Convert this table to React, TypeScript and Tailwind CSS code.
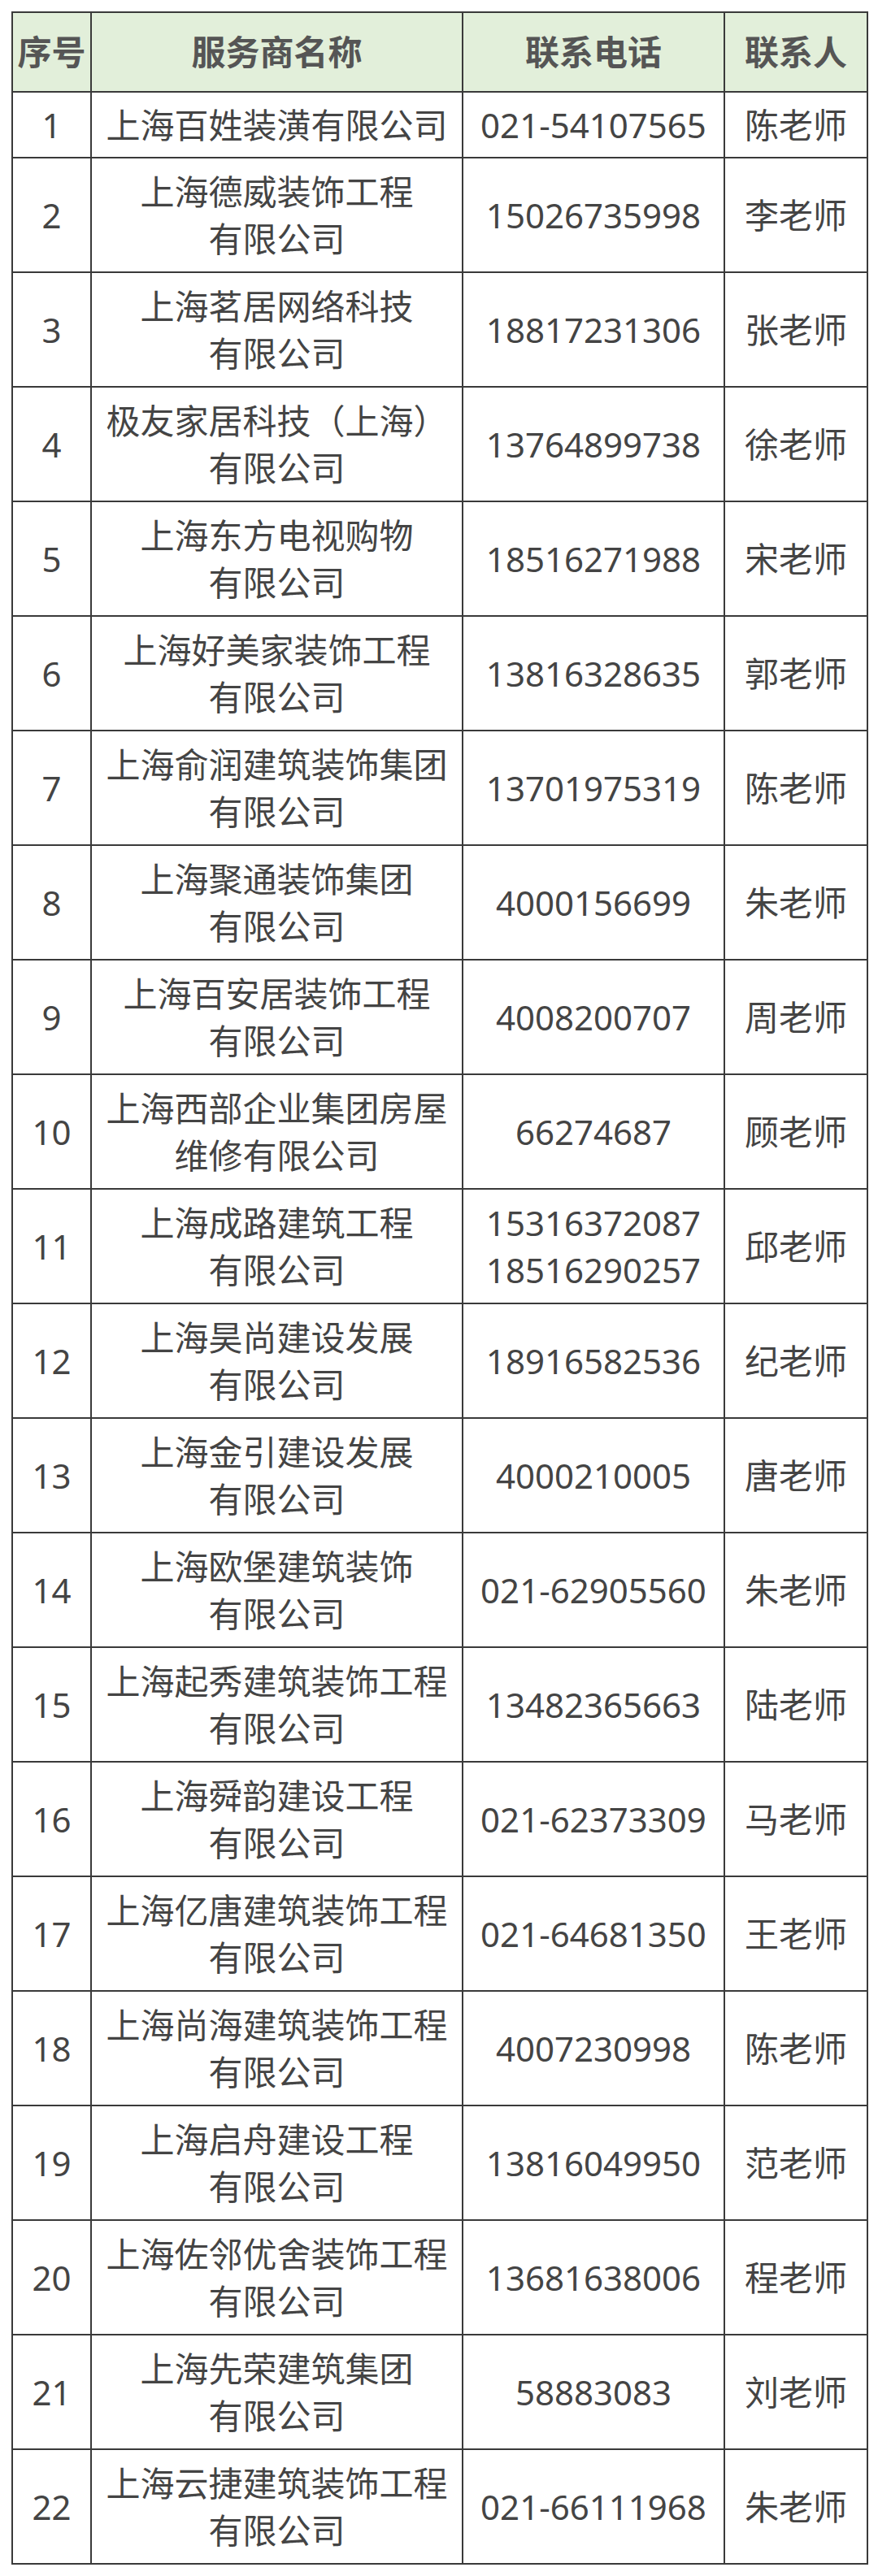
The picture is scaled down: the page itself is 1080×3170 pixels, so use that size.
type Row = { no: number; name: string[]; phone: string[]; contact: string };

const rows: Row[] = [
  { no: 1, name: ['上海百姓装潢有限公司'], phone: ['021-54107565'], contact: '陈老师' },
  { no: 2, name: ['上海德威装饰工程', '有限公司'], phone: ['15026735998'], contact: '李老师' },
  { no: 3, name: ['上海茗居网络科技', '有限公司'], phone: ['18817231306'], contact: '张老师' },
  { no: 4, name: ['极友家居科技（上海）', '有限公司'], phone: ['13764899738'], contact: '徐老师' },
  { no: 5, name: ['上海东方电视购物', '有限公司'], phone: ['18516271988'], contact: '宋老师' },
  { no: 6, name: ['上海好美家装饰工程', '有限公司'], phone: ['13816328635'], contact: '郭老师' },
  { no: 7, name: ['上海俞润建筑装饰集团', '有限公司'], phone: ['13701975319'], contact: '陈老师' },
  { no: 8, name: ['上海聚通装饰集团', '有限公司'], phone: ['4000156699'], contact: '朱老师' },
  { no: 9, name: ['上海百安居装饰工程', '有限公司'], phone: ['4008200707'], contact: '周老师' },
  { no: 10, name: ['上海西部企业集团房屋', '维修有限公司'], phone: ['66274687'], contact: '顾老师' },
  { no: 11, name: ['上海成路建筑工程', '有限公司'], phone: ['15316372087', '18516290257'], contact: '邱老师' },
  { no: 12, name: ['上海昊尚建设发展', '有限公司'], phone: ['18916582536'], contact: '纪老师' },
  { no: 13, name: ['上海金引建设发展', '有限公司'], phone: ['4000210005'], contact: '唐老师' },
  { no: 14, name: ['上海欧堡建筑装饰', '有限公司'], phone: ['021-62905560'], contact: '朱老师' },
  { no: 15, name: ['上海起秀建筑装饰工程', '有限公司'], phone: ['13482365663'], contact: '陆老师' },
  { no: 16, name: ['上海舜韵建设工程', '有限公司'], phone: ['021-62373309'], contact: '马老师' },
  { no: 17, name: ['上海亿唐建筑装饰工程', '有限公司'], phone: ['021-64681350'], contact: '王老师' },
  { no: 18, name: ['上海尚海建筑装饰工程', '有限公司'], phone: ['4007230998'], contact: '陈老师' },
  { no: 19, name: ['上海启舟建设工程', '有限公司'], phone: ['13816049950'], contact: '范老师' },
  { no: 20, name: ['上海佐邻优舍装饰工程', '有限公司'], phone: ['13681638006'], contact: '程老师' },
  { no: 21, name: ['上海先荣建筑集团', '有限公司'], phone: ['58883083'], contact: '刘老师' },
  { no: 22, name: ['上海云捷建筑装饰工程', '有限公司'], phone: ['021-66111968'], contact: '朱老师' },
];

const cell = 'border-2 border-[#3a3a3a] text-center align-middle p-0';

export default function App() {
  return (
    <div
      className="min-h-screen bg-white pt-[14px] pl-[14px] text-[42px] leading-[58px] text-[#444]"
      style={{ fontFamily: '"Noto Sans", "Noto Sans CJK SC", sans-serif' }}
    >
      <table className="border-collapse table-fixed w-[1052px]">
        <colgroup>
          <col className="w-[97px]" />
          <col className="w-[457px]" />
          <col className="w-[322px]" />
          <col className="w-[176px]" />
        </colgroup>
        <thead>
          <tr className="h-[98px] bg-[#e2efda] font-bold text-[#555]">
            <th className={cell}>序号</th>
            <th className={cell}>服务商名称</th>
            <th className={cell}>联系电话</th>
            <th className={cell}>联系人</th>
          </tr>
        </thead>
        <tbody>
          {rows.map((r) => (
            <tr key={r.no} className={r.no === 1 ? 'h-[81px]' : 'h-[141px]'}>
              <td className={cell}>{r.no}</td>
              <td className={cell}>
                {r.name.map((line, i) => (
                  <div key={i}>{line}</div>
                ))}
              </td>
              <td className={cell}>
                {r.phone.map((p, i) => (
                  <div key={i}>{p}</div>
                ))}
              </td>
              <td className={cell}>{r.contact}</td>
            </tr>
          ))}
        </tbody>
      </table>
    </div>
  );
}
